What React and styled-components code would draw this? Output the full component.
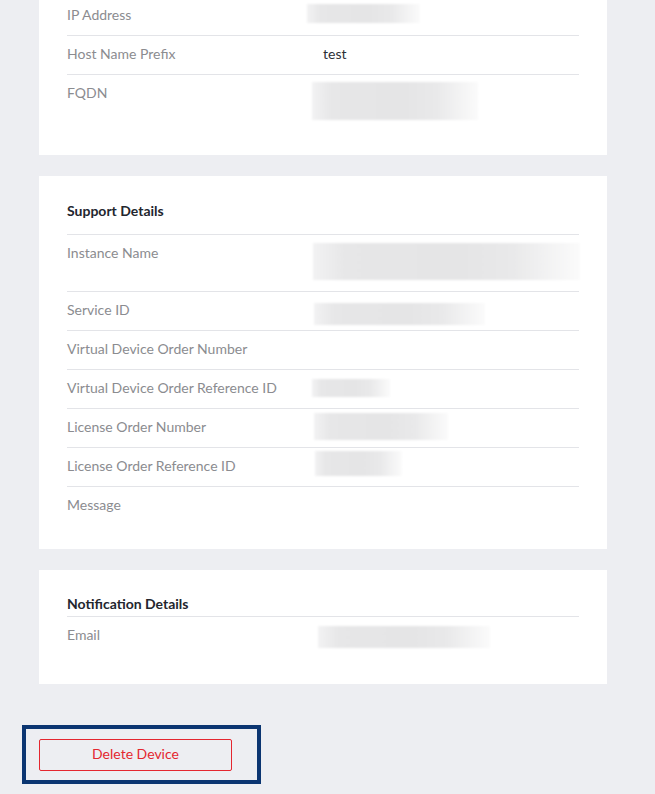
import React from "react";
import styled, { createGlobalStyle } from "styled-components";

const GlobalStyle = createGlobalStyle`
  html, body {
    margin: 0;
    padding: 0;
    background: #edeef2;
  }
  body {
    font-family: Lato, "Liberation Sans", Arial, sans-serif;
    -webkit-font-smoothing: antialiased;
  }
`;

const Page = styled.div`
  display: flex;
  flex-direction: column;
  gap: 21px;
  margin-top: -3px;
  padding: 0 0 10px 39px;
  width: 568px;
`;

const Card = styled.section`
  background: #ffffff;
  padding: ${(p) => p.$top}px 28px ${(p) => p.$bottom}px;
`;

const Heading = styled.h3`
  margin: 0;
  font-size: 14px;
  line-height: 18px;
  font-weight: 700;
  color: #23262e;
  padding-bottom: ${(p) => p.$gap}px;
`;

const Row = styled.div`
  display: grid;
  grid-template-columns: 240px 1fr;
  border-top: ${(p) => (p.$first ? "none" : "1px solid #e3e4e8")};
  min-height: 38px;
`;

const Label = styled.div`
  padding: 9px 0 12px;
  font-size: 14px;
  line-height: 17px;
  color: #8b8c90;
`;

const Value = styled.div`
  padding-top: 9px;
  padding-left: 16px;
  font-size: 14px;
  line-height: 17px;
  color: #2c2f36;
`;

const Blur = styled.div`
  width: ${(p) => p.$w}px;
  height: ${(p) => p.$h}px;
  margin: ${(p) => p.$top}px 0 ${(p) => p.$bottom || 0}px ${(p) => p.$left}px;
  background: linear-gradient(
    90deg,
    #f2f2f3 0%,
    #e7e7e8 12%,
    #e5e5e6 55%,
    #e9e9ea 75%,
    #fbfbfb 100%
  );
  filter: blur(1px);
`;

const Actions = styled.div`
  margin-top: 20px;
  margin-left: -17px;
  border: 4px solid #0b3571;
  padding: 10px 25px 9px 13px;
  box-sizing: content-box;
  width: 193px;
`;

const DeleteButton = styled.button`
  display: block;
  width: 193px;
  height: 32px;
  padding: 0 0 3px;
  border: 1px solid #e4262f;
  border-radius: 2px;
  background: transparent;
  color: #e4262f;
  font-family: Lato, "Liberation Sans", Arial, sans-serif;
  font-size: 14px;
  cursor: pointer;
`;

const Field = ({ label, first, children }) => (
  <Row $first={first}>
    <Label>{label}</Label>
    <div>{children}</div>
  </Row>
);

const App = () => {
  return (
    <>
      <GlobalStyle />
      <Page>
        <Card $top={0} $bottom={25}>
          <Field label="IP Address" first>
            <Blur $w={113} $h={19} $top={7} $left={0} />
          </Field>
          <Field label="Host Name Prefix">
            <Value>test</Value>
          </Field>
          <Field label="FQDN">
            <Blur $w={166} $h={38} $top={7} $bottom={10} $left={5} />
          </Field>
        </Card>

        <Card $top={26} $bottom={24}>
          <Heading $gap={14}>Support Details</Heading>
          <Field label="Instance Name">
            <Blur $w={267} $h={37} $top={8} $bottom={11} $left={6} />
          </Field>
          <Field label="Service ID">
            <Blur $w={171} $h={22} $top={11} $left={7} />
          </Field>
          <Field label="Virtual Device Order Number" />
          <Field label="Virtual Device Order Reference ID">
            <Blur $w={78} $h={18} $top={9} $left={5} />
          </Field>
          <Field label="License Order Number">
            <Blur $w={134} $h={27} $top={4} $left={7} />
          </Field>
          <Field label="License Order Reference ID">
            <Blur $w={87} $h={25} $top={3} $left={8} />
          </Field>
          <Field label="Message" />
        </Card>

        <Card $top={25} $bottom={26}>
          <Heading $gap={3}>Notification Details</Heading>
          <Field label="Email">
            <Blur $w={172} $h={22} $top={9} $bottom={10} $left={11} />
          </Field>
        </Card>

        <Actions>
          <DeleteButton>Delete Device</DeleteButton>
        </Actions>
      </Page>
    </>
  );
};

export default App;
